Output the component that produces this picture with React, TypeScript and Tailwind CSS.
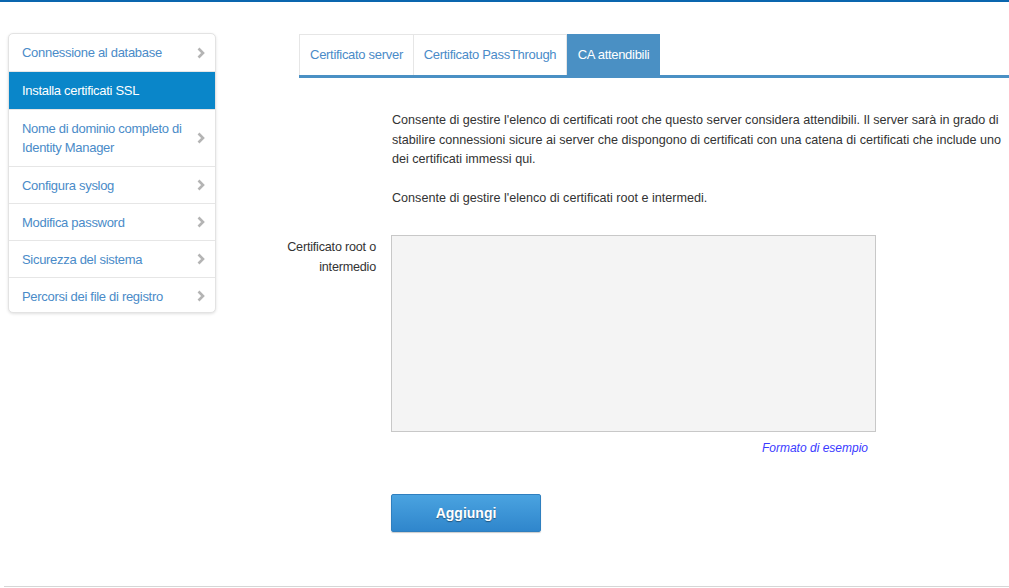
import React from "react";

const items: { label: string; active?: boolean; twoLine?: boolean }[] = [
  { label: "Connessione al database" },
  { label: "Installa certificati SSL", active: true },
  { label: "Nome di dominio completo di Identity Manager", twoLine: true },
  { label: "Configura syslog" },
  { label: "Modifica password" },
  { label: "Sicurezza del sistema" },
  { label: "Percorsi dei file di registro" },
];

function Chevron() {
  return (
    <svg width="8" height="12" viewBox="0 0 8 12" className="shrink-0">
      <path d="M1.5 1.5 L6 6 L1.5 10.5" fill="none" stroke="#b4b4b4" strokeWidth="2.6" />
    </svg>
  );
}

export default function App() {
  return (
    <div
      className="relative w-[1009px] h-[588px] bg-white overflow-hidden text-[#333]"
      style={{ fontFamily: '"Liberation Sans", Arial, sans-serif' }}
    >
      <div className="h-[2px] bg-[#0a66ae]" />
      <div className="flex pt-[31px]">
        {/* Sidebar */}
        <div className="ml-[8px] w-[208px] h-[280px] shrink-0 rounded-[5px] border border-[#e3e3e3] shadow-[0_1px_3px_rgba(0,0,0,0.12)] overflow-hidden bg-white">
          {items.map((it, i) => (
            <div
              key={i}
              className={
                "flex items-center justify-between pl-[13px] pr-[10px] text-[13px] tracking-[-0.3px] leading-[19px] " +
                (i > 0 ? "border-t border-[#e6e6e6] " : "") +
                (it.active ? "bg-[#0a86c9] text-white h-[38px] " : "text-[#4a8bc8] ") +
                (it.twoLine ? "h-[57px] " : it.active ? "" : "h-[37px] ")
              }
            >
              <span className={it.twoLine ? "w-[170px]" : ""}>{it.label}</span>
              {!it.active && <Chevron />}
            </div>
          ))}
        </div>

        {/* Main */}
        <div className="ml-[83px] flex-1 flex flex-col">
          <div className="flex border-b-[3px] border-[#4a90c4] h-[44px] items-stretch mt-[1px]">
            <div className="w-[115px] border border-b-0 border-[#e6e6e6] text-[#4a8bc8] text-[13px] tracking-[-0.3px] flex items-center justify-center">
              Certificato server
            </div>
            <div className="w-[153px] border-t border-r border-[#e6e6e6] text-[#4a8bc8] text-[13px] tracking-[-0.3px] flex items-center justify-center">
              Certificato PassThrough
            </div>
            <div className="w-[93px] bg-[#4a90c4] text-white text-[13px] tracking-[-0.3px] flex items-center justify-center">
              CA attendibili
            </div>
          </div>

          <div className="ml-[93px] mt-[33px] text-[12.6px] leading-[19.5px] text-[#333]">
            <p>
              Consente di gestire l'elenco di certificati root che questo server considera attendibili. Il server sarà in grado di
              stabilire connessioni sicure ai server che dispongono di certificati con una catena di certificati che include uno dei
              certificati immessi qui.
            </p>
            <p className="mt-[19px]">Consente di gestire l'elenco di certificati root e intermedi.</p>
          </div>

          <div className="flex mt-[27px]">
            <div className="w-[100px] -ml-[23px] shrink-0 whitespace-nowrap text-right text-[12.6px] tracking-[-0.2px] leading-[20px] pt-[2px] text-[#333]">
              Certificato root o
              <br />
              intermedio
            </div>
            <div className="ml-[15px] flex flex-col">
              <textarea className="w-[485px] h-[197px] bg-[#f4f4f4] border border-[#c8c8c8] resize-none outline-none" />
              <div className="w-[477px] text-right mt-[7px] text-[12px] italic text-[#3a3aff]">Formato di esempio</div>
              <button className="mt-[37px] w-[150px] h-[38px] rounded-[2px] border border-[#2f7fbf] bg-gradient-to-b from-[#4aa3e0] to-[#2f86cc] text-white font-bold text-[14px] [text-shadow:0_1px_1px_rgba(0,0,0,0.4)] shadow-[0_1px_1px_rgba(0,0,0,0.2)]">
                Aggiungi
              </button>
            </div>
          </div>
        </div>
      </div>
      <div className="absolute left-[4px] right-0 bottom-[1px] h-[1px] bg-[#d6d6d6]" />
    </div>
  );
}
